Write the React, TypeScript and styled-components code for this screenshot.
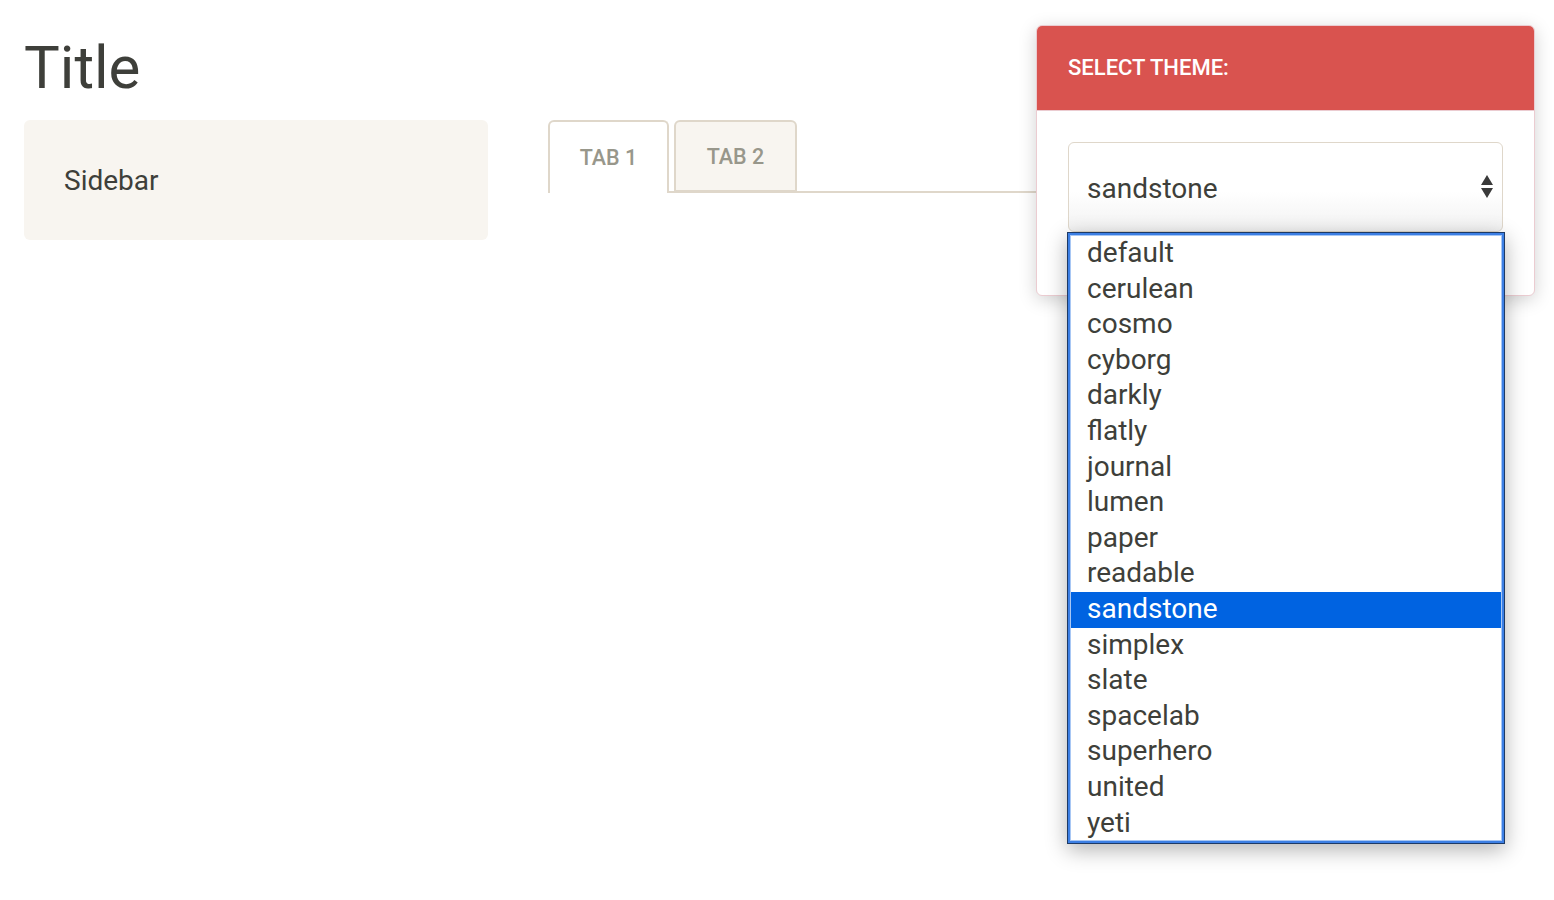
import React from "react";
import styled, { createGlobalStyle } from "styled-components";

const Global = createGlobalStyle`
  html, body { margin: 0; padding: 0; background: #fff; }
  body { font-family: Roboto, "Liberation Sans", sans-serif; color: #3e3f3a; }
  * { box-sizing: border-box; }
`;

const Page = styled.div`
  position: relative;
  width: 1554px;
  height: 900px;
  padding: 0 24px;
  overflow: hidden;
`;

const Title = styled.h1`
  margin: 34px 0 19px;
  font-size: 60px;
  font-weight: 400;
  line-height: 67px;
  color: #3e3f3a;
`;

const Row = styled.div`
  display: flex;
  gap: 60px;
  align-items: flex-start;
`;

const Well = styled.div`
  width: 464px;
  height: 120px;
  padding: 41px 40px 39px;
  background: #f8f5f0;
  border-radius: 6px;
  font-size: 28px;
  line-height: 40px;
`;

const Main = styled.div`
  flex: 1;
`;

const Tabs = styled.ul`
  display: flex;
  list-style: none;
  margin: 0;
  padding: 0;
  border-bottom: 2px solid #dfd7ca;
  height: 73px;
`;

const Tab = styled.li<{ $active?: boolean }>`
  width: ${(p) => (p.$active ? "121px" : "123px")};
  height: ${(p) => (p.$active ? "73px" : "72px")};
  margin-right: 5px;
  margin-bottom: ${(p) => (p.$active ? "-2px" : "0")};
  display: flex;
  align-items: center;
  justify-content: center;
  border: 2px solid #dfd7ca;
  border-bottom: ${(p) => (p.$active ? "none" : "2px solid #dfd7ca")};
  border-radius: 6px 6px 0 0;
  background: ${(p) => (p.$active ? "#fff" : "#f8f5f0")};
  color: #98978b;
  font-size: 21.5px;
  font-weight: 500;
  text-transform: uppercase;
  padding-bottom: ${(p) => (p.$active ? "1px" : "0")};
`;

const Panel = styled.div`
  position: absolute;
  top: 25px;
  right: 19px;
  width: 499px;
  height: 271px;
  background: #fff;
  border: 1px solid #ebccd1;
  border-radius: 6px;
  box-shadow: 0 4px 18px rgba(0, 0, 0, 0.18);
`;

const PanelHeading = styled.div`
  height: 85px;
  background: #d9534f;
  border-radius: 5px 5px 0 0;
  border-bottom: 1px solid #ebccd1;
  padding: 0 31px 2px;
  display: flex;
  align-items: center;
  color: #fff;
  font-size: 22px;
  font-weight: 500;
  text-transform: uppercase;
`;

const PanelBody = styled.div`
  padding: 31px 31px 0;
`;

const SelectWrap = styled.div`
  position: relative;
`;

const SelectBox = styled.div`
  height: 90px;
  border: 1px solid #dfd7ca;
  border-radius: 6px;
  background: linear-gradient(to bottom, #fff 55%, #f2f2f2 100%);
  display: flex;
  align-items: center;
  justify-content: space-between;
  padding: 2px 8px 0 18px;
  font-size: 28px;
  color: #3e3f3a;
`;

const Arrows = styled.svg`
  width: 14px;
  height: 26px;
  margin-top: -2px;
`;

const ListBox = styled.div`
  position: absolute;
  top: 90px;
  left: -1px;
  width: 438px;
  height: 612px;
  background: #fff;
  border: 1px solid #1d3a66;
  box-shadow: inset 0 0 0 2px #3c7fe4, inset 0 0 0 3px #a8c7f4,
    0 6px 20px rgba(0, 0, 0, 0.3);
  padding: 3px 3px 0;
`;

const Option = styled.div<{ $selected?: boolean }>`
  height: 35.6px;
  line-height: 34.6px;
  padding-left: 16px;
  font-size: 28px;
  white-space: nowrap;
  color: ${(p) => (p.$selected ? "#fff" : "#3e3f3a")};
  background: ${(p) => (p.$selected ? "#0063e1" : "transparent")};
`;

const themes = [
  "default",
  "cerulean",
  "cosmo",
  "cyborg",
  "darkly",
  "flatly",
  "journal",
  "lumen",
  "paper",
  "readable",
  "sandstone",
  "simplex",
  "slate",
  "spacelab",
  "superhero",
  "united",
  "yeti",
];

export default function App() {
  return (
    <>
      <Global />
      <Page>
        <Title>Title</Title>
        <Row>
          <Well>Sidebar</Well>
          <Main>
            <Tabs>
              <Tab $active>Tab 1</Tab>
              <Tab>Tab 2</Tab>
            </Tabs>
          </Main>
        </Row>
        <Panel>
          <PanelHeading>Select theme:</PanelHeading>
          <PanelBody>
            <SelectWrap>
              <SelectBox>
                <span>sandstone</span>
                <Arrows viewBox="0 0 14 26">
                  <polygon points="7,1 13,11 1,11" fill="#3a3a3a" />
                  <polygon points="1,14 13,14 7,24" fill="#3a3a3a" />
                </Arrows>
              </SelectBox>
              <ListBox>
                {themes.map((t) => (
                  <Option key={t} $selected={t === "sandstone"}>
                    {t}
                  </Option>
                ))}
              </ListBox>
            </SelectWrap>
          </PanelBody>
        </Panel>
      </Page>
    </>
  );
}
